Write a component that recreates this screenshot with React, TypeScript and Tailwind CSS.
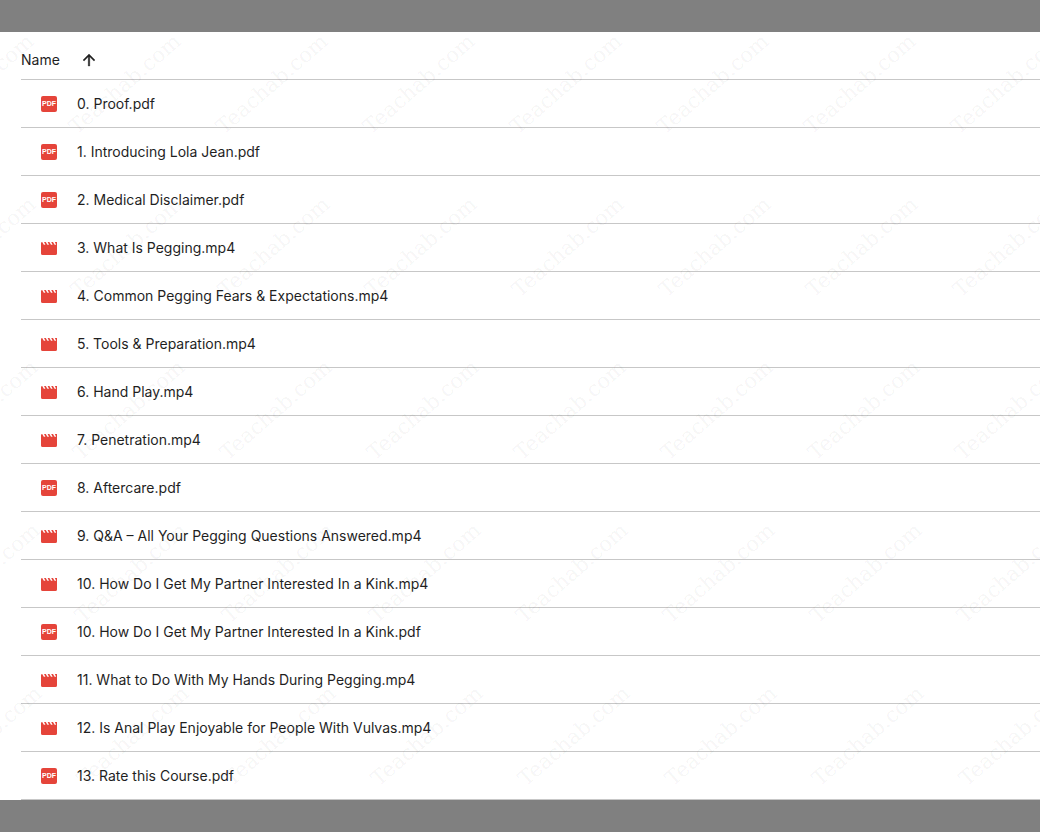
type FileKind = 'pdf' | 'video'

const files: { name: string; kind: FileKind }[] = [
  { name: '0. Proof.pdf', kind: 'pdf' },
  { name: '1. Introducing Lola Jean.pdf', kind: 'pdf' },
  { name: '2. Medical Disclaimer.pdf', kind: 'pdf' },
  { name: '3. What Is Pegging.mp4', kind: 'video' },
  { name: '4. Common Pegging Fears & Expectations.mp4', kind: 'video' },
  { name: '5. Tools & Preparation.mp4', kind: 'video' },
  { name: '6. Hand Play.mp4', kind: 'video' },
  { name: '7. Penetration.mp4', kind: 'video' },
  { name: '8. Aftercare.pdf', kind: 'pdf' },
  { name: '9. Q&A – All Your Pegging Questions Answered.mp4', kind: 'video' },
  { name: '10. How Do I Get My Partner Interested In a Kink.mp4', kind: 'video' },
  { name: '10. How Do I Get My Partner Interested In a Kink.pdf', kind: 'pdf' },
  { name: '11. What to Do With My Hands During Pegging.mp4', kind: 'video' },
  { name: '12. Is Anal Play Enjoyable for People With Vulvas.mp4', kind: 'video' },
  { name: '13. Rate this Course.pdf', kind: 'pdf' },
]

function PdfIcon() {
  return (
    <span
      aria-hidden="true"
      className="flex size-4 items-center justify-center rounded-xs bg-[#e5443a] font-['Liberation_Sans',sans-serif] text-[7px] leading-none font-bold text-white"
    >
      PDF
    </span>
  )
}

function VideoIcon() {
  return (
    <svg aria-hidden="true" viewBox="0 0 16 16" className="size-4 fill-[#e5443a]">
      <path d="M0 3.2Q0 2 1.2 2L2.8 4.8H4.4L3 2H4.8L6.4 4.8H8L6.6 2H8.4L10 4.8H11.6L10.2 2H12L13.6 4.8H15.2L13.8 2H16V13.4Q16 15 14.4 15H1.6Q0 15 0 13.4Z" />
    </svg>
  )
}

function ArrowUp() {
  return (
    <svg aria-hidden="true" viewBox="0 0 24 24" className="size-[18px] fill-[#1f1f1f] stroke-[#1f1f1f] [stroke-width:0.5]">
      <path d="M4 12l1.41 1.41L11 7.83V20h2V7.83l5.58 5.59L20 12l-8-8-8 8z" />
    </svg>
  )
}

function Watermark() {
  const rows = [0, 1, 2, 3, 4]
  const columns = [0, 1, 2, 3, 4, 5, 6, 7]
  return (
    <div
      aria-hidden="true"
      className="pointer-events-none absolute inset-0 overflow-hidden font-['DejaVu_Serif','DejaVu_Sans',serif] text-[21px] text-black/5 select-none"
    >
      <div className="-mt-[30px]">
        {rows.map((row) => (
          <div key={row} className="flex h-[163px] w-max" style={{ marginLeft: row * 2 - 96 }}>
            {columns.map((column) => (
              <span key={column} className="flex w-[147px] items-center justify-center">
                <span className="-rotate-41">Teachab.com</span>
              </span>
            ))}
          </div>
        ))}
      </div>
    </div>
  )
}

export default function App() {
  return (
    <div className="min-h-screen bg-[#808080] py-8 font-[Inter,sans-serif] text-sm text-[#1f1f1f]">
      <main className="relative overflow-hidden bg-white pl-[21px]">
        <table className="w-full border-separate border-spacing-0 text-left">
          <thead>
            <tr>
              <th scope="col" aria-sort="ascending" className="h-12 border-b border-[#c7c7c7] p-0 pt-2 font-normal">
                <button type="button" className="flex items-center gap-5">
                  Name
                  <ArrowUp />
                </button>
              </th>
            </tr>
          </thead>
          <tbody>
            {files.map((file) => (
              <tr key={file.name}>
                <td className="h-12 border-b border-[#c7c7c7] p-0">
                  <div className="flex items-center gap-5 pl-5">
                    {file.kind === 'pdf' ? <PdfIcon /> : <VideoIcon />}
                    <span>{file.name}</span>
                  </div>
                </td>
              </tr>
            ))}
          </tbody>
        </table>
        <Watermark />
      </main>
    </div>
  )
}
